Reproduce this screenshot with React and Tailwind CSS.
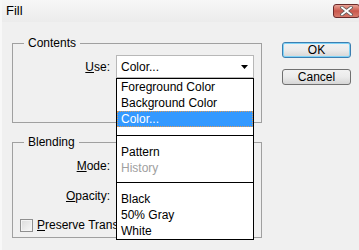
import React from "react";

const font = { fontFamily: '"Liberation Sans", Arial, sans-serif' };

const Item = ({ children, active, muted }) => (
  <div
    className={
      "h-[16px] leading-[16px] pl-[4px] whitespace-nowrap " +
      (active
        ? "bg-[#3399ff] text-white outline-1 outline-dotted outline-[#d89a5a] -outline-offset-1"
        : muted
        ? "text-[#a0a0a0]"
        : "text-black")
    }
  >
    {children}
  </div>
);

const Separator = ({ top }) => (
  <div className={top ? "pt-[8px] pb-[8px]" : "pt-[6px] pb-[8px]"}>
    <div className="h-px bg-black" />
  </div>
);

const Button = ({ children, focused }) => (
  <button
    className={
      "w-[69px] h-[16px] rounded-[3px] border text-[12px] leading-[14px] text-black bg-gradient-to-b from-[#f2f2f2] via-[#ebebeb] to-[#d6d6d6] " +
      (focused
        ? "border-[#3c7fb1] shadow-[inset_0_0_0_1px_#7fd3f7]"
        : "border-[#707070]")
    }
  >
    {children}
  </button>
);

const CloseButton = () => (
  <div className="w-[27px] h-[14px] rounded-[3px] border border-[#6b2a2a] bg-gradient-to-b from-[#e8a397] via-[#c9574c] to-[#d67a6c] flex items-center justify-center">
    <svg width="13" height="10" viewBox="0 0 13 10">
      <path
        d="M2 1.5 L11 8.5 M11 1.5 L2 8.5"
        stroke="#5a5a5a"
        strokeWidth="3.4"
        strokeLinecap="square"
      />
      <path
        d="M2 1.5 L11 8.5 M11 1.5 L2 8.5"
        stroke="#ffffff"
        strokeWidth="1.8"
        strokeLinecap="square"
      />
    </svg>
  </div>
);

const Label = ({ u, rest }) => (
  <span className="w-[103px] shrink-0 text-right pr-[6px] text-black">
    <u>{u}</u>
    {rest}
  </span>
);

export default function App() {
  return (
    <div
      className="w-[359px] h-[250px] bg-[#f0f0f0] overflow-hidden text-[12px] border-l-[2px] border-[#f8f8f8]"
      style={font}
    >
      <div className="h-[22px] flex items-start justify-between pl-[4px] bg-gradient-to-b from-[#f7f7f7] to-[#ececec]">
        <span className="mt-[3px] text-[13px] leading-[16px] text-black">Fill</span>
        <div className="mt-[4px] mr-[-1px]">
          <CloseButton />
        </div>
      </div>

      <div className="flex">
        <div className="ml-[10px] w-[250px]">
          <fieldset className="h-[88px] mt-[13px] border border-[#a0a0a0] px-0">
            <legend className="ml-[11px] px-[4px] leading-[16px] text-black">Contents</legend>
            <div className="flex items-center mt-[4px] h-[23px]">
              <Label u="U" rest="se:" />
              <div className="relative w-[138px] h-[23px] bg-white border border-[#b8b8b8] flex items-center pl-[4px]">
                <span className="flex-1 text-black">Color...</span>
                <svg width="7" height="4" viewBox="0 0 7 4" className="mr-[5px]">
                  <path d="M0 0 H7 L3.5 4 Z" fill="#000" />
                </svg>
                <div className="absolute left-[-1px] top-[22px] w-[138px] bg-white border border-black z-10">
                  <Item>Foreground Color</Item>
                  <Item>Background Color</Item>
                  <Item active>Color...</Item>
                  <Separator top />
                  <Item>Pattern</Item>
                  <Item muted>History</Item>
                  <Separator />
                  <Item>Black</Item>
                  <Item>50% Gray</Item>
                  <Item>White</Item>
                </div>
              </div>
            </div>
          </fieldset>

          <fieldset className="h-[104px] mt-[11px] border border-[#a0a0a0] px-0">
            <legend className="ml-[11px] px-[4px] leading-[16px] text-black">Blending</legend>
            <div className="flex items-center h-[16px] mt-[8px]">
              <Label u="M" rest="ode:" />
            </div>
            <div className="flex items-center h-[16px] mt-[14px]">
              <Label u="O" rest="pacity:" />
            </div>
            <div className="flex items-center h-[16px] mt-[13px] pl-[7px]">
              <span className="w-[13px] h-[13px] shrink-0 border border-[#8f8f8f] bg-gradient-to-br from-[#dcdcdc] to-[#f8f8f8] shadow-[inset_0_0_0_1px_#f4f4f4]" />
              <span className="ml-[4px] w-[79px] overflow-hidden text-black whitespace-nowrap">
                <u>P</u>reserve Transparency
              </span>
            </div>
          </fieldset>
        </div>

        <div className="ml-[20px] pt-[20px] flex flex-col gap-[11px]">
          <Button focused>OK</Button>
          <Button>Cancel</Button>
        </div>
      </div>
    </div>
  );
}
